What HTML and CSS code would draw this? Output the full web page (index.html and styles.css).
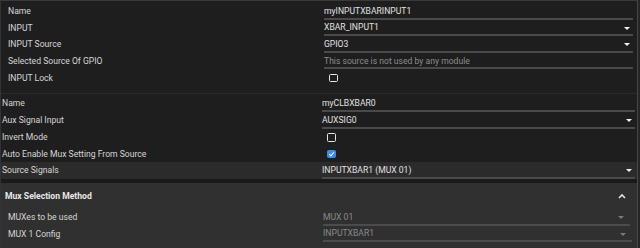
FILE: index.html
```html
<!DOCTYPE html>
<html lang="en">
<head>
    <meta charset="UTF-8">
    <title>CLB XBAR</title>
    <link rel="stylesheet" href="styles.css">
</head>
<body>
<div class="frame">
    <div class="panel">
        <section class="group group-input">
            <div class="row">
                <span class="label">Name</span>
                <span class="field">myINPUTXBARINPUT1</span>
            </div>
            <div class="row">
                <span class="label">INPUT</span>
                <span class="field select">XBAR_INPUT1<i class="arrow"></i></span>
            </div>
            <div class="row">
                <span class="label">INPUT Source</span>
                <span class="field select">GPIO3<i class="arrow"></i></span>
            </div>
            <div class="row">
                <span class="label">Selected Source Of GPIO</span>
                <span class="field muted">This source is not used by any module</span>
            </div>
            <div class="row">
                <span class="label">INPUT Lock</span>
                <span class="field plain"><i class="check"></i></span>
            </div>
        </section>

        <section class="group group-clb">
            <div class="row">
                <span class="label">Name</span>
                <span class="field">myCLBXBAR0</span>
            </div>
            <div class="row">
                <span class="label">Aux Signal Input</span>
                <span class="field select">AUXSIG0<i class="arrow"></i></span>
            </div>
            <div class="row">
                <span class="label">Invert Mode</span>
                <span class="field plain"><i class="check"></i></span>
            </div>
            <div class="row">
                <span class="label">Auto Enable Mux Setting From Source</span>
                <span class="field plain"><i class="check checked"></i></span>
            </div>
            <div class="row active">
                <span class="label">Source Signals</span>
                <span class="field select">INPUTXBAR1 (MUX 01)<i class="arrow"></i></span>
            </div>
        </section>

        <section class="group group-mux">
            <div class="mux-head">
                <span>Mux Selection Method</span>
                <svg class="chevron" width="8" height="6" viewBox="0 0 8 6">
                    <path d="M1 5 L4 2 L7 5" fill="none" stroke="#e0e0e0" stroke-width="1.6"/>
                </svg>
            </div>
            <div class="row">
                <span class="label">MUXes to be used</span>
                <span class="field select disabled">MUX 01<i class="arrow"></i></span>
            </div>
            <div class="row">
                <span class="label">MUX 1 Config</span>
                <span class="field select disabled wide">INPUTXBAR1<i class="arrow"></i></span>
            </div>
        </section>
    </div>
</div>
</body>
</html>
```

FILE: styles.css
```css
body {
    margin: 0;
    background: #252525;
    font-family: Roboto, "Liberation Sans", sans-serif;
    font-size: 8.6px;
    color: #d6d6d6;
}

.frame {
    width: 640px;
    height: 248px;
    overflow: hidden;
}

.panel {
    width: 636px;
    border-left: 1px solid #333;
    border-right: 1px solid #474747;
    border-top: 1px solid #3a3a3a;
    background: #1e1e1e;
}

.row {
    display: grid;
    align-items: center;
    height: 16.6px;
}

.field {
    position: relative;
    height: 100%;
    display: flex;
    align-items: center;
    color: #e2e2e2;
    border-bottom: 2px solid #4a4a4a;
    box-sizing: border-box;
    padding-top: 1px;
}

.field.plain {
    border-bottom: none;
    padding-left: 5px;
}

.field.muted {
    color: #8d8d8d;
}

/* Small filled triangle of the dropdowns */
.arrow {
    position: absolute;
    right: 3px;
    top: 7px;
    width: 0;
    height: 0;
    border-left: 3px solid transparent;
    border-right: 3px solid transparent;
    border-top: 3px solid #f2f2f2;
}

.check {
    display: block;
    width: 6.5px;
    height: 6.5px;
    border: 1.4px solid #e6e6e6;
    border-radius: 1.5px;
}

.check.checked {
    background: #3a8ee6;
    border-color: #3a8ee6;
    position: relative;
}

.check.checked:after {
    content: "";
    position: absolute;
    left: 2px;
    top: 0px;
    width: 2px;
    height: 4px;
    border-right: 1.3px solid #fff;
    border-bottom: 1.3px solid #fff;
    transform: rotate(40deg);
}

/* first group */
.group-input {
    padding: 2px 0 4px 7px;
    border-bottom: 1px solid #2b2b2b;
    height: 86px;
}

.group-input .row {
    grid-template-columns: 316px 309px;
}

/* second group */
.group-clb {
    padding: 1px 0 0 1px;
    height: 84px;
}

.group-clb .row {
    height: 16.75px;
    grid-template-columns: 320px 313px;
}

.group-clb .row.active {
    background: #2b2b2b;
    margin-left: -1px;
    padding-left: 1px;
}

/* mux group */
.group-mux {
    background: #303030;
    border-top: 4px solid #1a1a1a;
    height: 70px;
}

.mux-head {
    display: flex;
    align-items: center;
    justify-content: space-between;
    height: 26px;
    padding: 0 11px 0 4px;
    font-weight: bold;
    color: #e8e8e8;
}

.chevron {
    display: block;
}

.group-mux .row {
    padding-left: 7px;
    grid-template-columns: 315px 307px;
}

.field.disabled {
    color: #8a8a8a;
    border-bottom-color: #4c4c4c;
}

.field.disabled .arrow {
    border-top-color: #7a7a7a;
    right: 6px;
}

.field.wide {
    width: 309px;
}
```
